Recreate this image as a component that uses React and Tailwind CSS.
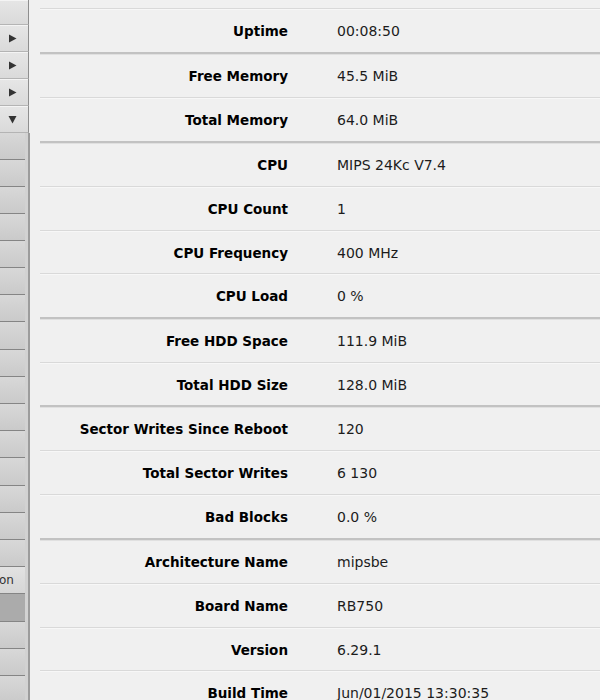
import React from "react";

const rows = [
  { label: "Uptime", value: "00:08:50" },
  { label: "Free Memory", value: "45.5 MiB", group: true },
  { label: "Total Memory", value: "64.0 MiB" },
  { label: "CPU", value: "MIPS 24Kc V7.4", group: true },
  { label: "CPU Count", value: "1" },
  { label: "CPU Frequency", value: "400 MHz", short: true },
  { label: "CPU Load", value: "0 %" },
  { label: "Free HDD Space", value: "111.9 MiB", group: true },
  { label: "Total HDD Size", value: "128.0 MiB", short: true },
  { label: "Sector Writes Since Reboot", value: "120", group: true },
  { label: "Total Sector Writes", value: "6 130" },
  { label: "Bad Blocks", value: "0.0 %" },
  { label: "Architecture Name", value: "mipsbe", group: true },
  { label: "Board Name", value: "RB750" },
  { label: "Version", value: "6.29.1", short: true },
  { label: "Build Time", value: "Jun/01/2015 13:30:35" },
];

// top menu entries: height + arrow kind
const topItems = [
  { h: "h-[25px]", arrow: null },
  { h: "h-[27px]", arrow: "right" },
  { h: "h-[27px]", arrow: "right" },
  { h: "h-[27px]", arrow: "right" },
  { h: "h-[27px]", arrow: "down" },
];

const Arrow = ({ dir }) =>
  dir === "down" ? (
    <svg width="9" height="9" viewBox="0 0 9 9">
      <polygon points="0.5,1 8.5,1 4.5,8.5" fill="#333" />
    </svg>
  ) : (
    <svg width="9" height="9" viewBox="0 0 9 9">
      <polygon points="1,0.5 8.5,4.5 1,8.5" fill="#333" />
    </svg>
  );

const SideItem = ({ tall, selected, hover, children }) => (
  <div
    className={`${tall ? "h-[28px]" : "h-[27px]"} w-[25px] border-b border-[#858585] flex items-center overflow-hidden whitespace-nowrap text-[12px] text-[#333] ${
      selected
        ? "bg-[#ababab]"
        : hover
        ? "bg-gradient-to-b from-[#e2e2e2] to-[#d6d6d6]"
        : "bg-gradient-to-b from-[#d8d8d8] to-[#cacaca]"
    }`}
  >
    {children}
  </div>
);

export default function App() {
  const lower = Array.from({ length: 21 }, (_, i) => i);

  return (
    <div className="flex h-[700px] w-[600px] overflow-hidden bg-[#f0f0f0] font-['DejaVu_Sans',Verdana,sans-serif]">
      {/* sidebar, scrolled so only the right edge shows */}
      <aside className="w-[30px] shrink-0 flex flex-col">
        <div className="flex flex-col">
          {topItems.map((it, i) => (
            <div
              key={i}
              className={`${it.h} w-[29px] flex items-center pl-[8px] bg-gradient-to-b from-[#e6e6e6] to-[#dadada] border-r border-[#8e8e8e] border-b border-b-[#b4b4b4] shadow-[inset_0_1px_0_#f4f4f4]`}
            >
              {it.arrow && <Arrow dir={it.arrow} />}
            </div>
          ))}
        </div>
        <div className="flex flex-1">
          <div className="flex flex-col">
            {lower.map((i) => (
              <SideItem key={i} tall={i === 7 || i === 12 || i === 17} selected={i === 17} hover={i === 16}>
                {i === 16 && <span className="-ml-[1px]">on</span>}
              </SideItem>
            ))}
          </div>
          <div className="w-[3px] bg-[#d2d2d2]" />
          <div className="w-[2px] bg-[#9c9c9c]" />
        </div>
      </aside>

      {/* system resources */}
      <main className="flex-1 pl-[10px] text-black">
        <div className="h-[8px]" />
        {rows.map((r) => (
          <div
            key={r.label}
            className={`flex items-center pt-[2px] ${
              r.group
                ? "h-[45px] border-t-2 border-[#c2c2c2] shadow-[inset_0_1px_0_#e0e0e0]"
                : `${r.short ? "h-[43px]" : "h-[44px]"} border-t border-[#d9d9d9] shadow-[inset_0_1px_0_#f7f7f7]`
            }`}
          >
            <div className="w-[248px] text-right text-[13.5px] font-bold">{r.label}</div>
            <div className="pl-[49px] text-[14px] text-[#1c1c1c]">{r.value}</div>
          </div>
        ))}
      </main>
    </div>
  );
}
